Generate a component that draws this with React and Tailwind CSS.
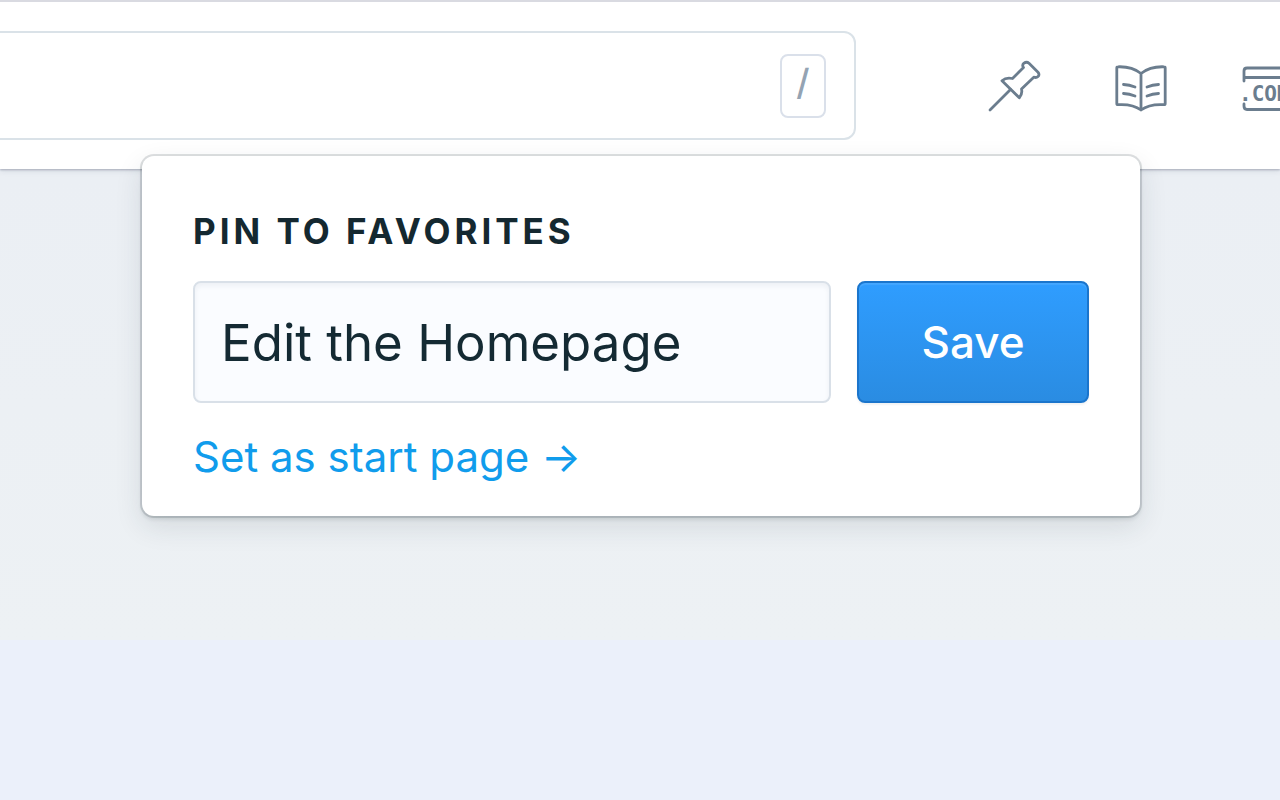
function PinIcon() {
    return (
        <svg viewBox="0 0 52 52" className="size-[52px] shrink-0 overflow-visible" fill="none" stroke="currentColor" strokeWidth="2.8" strokeLinecap="round" strokeLinejoin="round" aria-hidden="true">
            <path d="M2 48 22.500 27.500" />
            <path d="M14 18.800C17 16 20.500 15.500 24.500 16.500L35.500 5.500C34.300 4 34.500 2.300 36 1.200C37.500 .1 39.500 0 41 1.300L50 10.300C51.300 11.700 51.300 13.300 50 14.500C48.800 15.700 47.300 15.700 45.800 15.200L33.500 27C34.200 30 33.800 33 31.300 35.800Z" />
        </svg>
    )
}

function BookIcon() {
    return (
        <svg viewBox="0 0 52 52" className="size-[52px] shrink-0" fill="none" stroke="currentColor" strokeWidth="2.8" strokeLinecap="round" strokeLinejoin="round" aria-hidden="true">
            <path d="M26 11.500C19 6 11 4.500 3 4.800Q1.800 4.800 1.800 6V41.500Q1.800 42.700 3 42.700C11 42.200 20 43.500 26 48C32 43.500 41 42.200 49 42.700Q50.200 42.700 50.200 41.500V6Q50.200 4.800 49 4.800C41 4.500 33 6 26 11.500ZM26 11.500V48" />
            <path d="M8.500 22.500C12.500 22.600 16.500 23.500 20 25M8.500 31.500C12.500 31.600 16.500 32.500 20 34M43.500 22.500C39.500 22.600 35.500 23.500 32 25M43.500 31.500C39.500 31.600 35.500 32.500 32 34" />
        </svg>
    )
}

function DomainIcon() {
    return (
        <svg viewBox="0 0 52 52" className="size-[52px] shrink-0 overflow-visible" fill="none" stroke="currentColor" strokeWidth="2.8" strokeLinecap="round" strokeLinejoin="round" aria-hidden="true">
            <path d="M2 19V9Q2 6 5 6H47Q50 6 50 9V19M2 15.500H50M2 42V44Q2 47.500 5 47.500H47Q50 47.500 50 44V42" />
            <text x="-3" y="39" fill="currentColor" stroke="none" className="font-['DejaVu_Sans_Mono',monospace] text-[21px] font-bold">.COM</text>
        </svg>
    )
}

const tools = [
    { label: 'Pin', Icon: PinIcon },
    { label: 'Docs', Icon: BookIcon },
    { label: 'Domains', Icon: DomainIcon },
]

function PinPopover() {
    return (
        <form
            onSubmit={(e) => e.preventDefault()}
            className="absolute top-[156px] right-[140px] left-[142px] rounded-xl bg-white px-[51px] pt-[55px] pb-[35px] shadow-[0_0_0_2px_rgba(30,40,50,0.14),0_3px_4px_rgba(30,50,60,0.14),0_10px_28px_rgba(30,50,60,0.12)]"
        >
            <label htmlFor="pin-name" className="block text-[35px] leading-10 font-bold tracking-[4px] text-[#142830]">PIN TO FAVORITES</label>
            <div className="mt-[30px] flex gap-[26px]">
                <input
                    id="pin-name"
                    defaultValue="Edit the Homepage"
                    className="h-[122px] min-w-0 flex-1 rounded-lg border-2 border-[#d9e0e8] bg-[#fafcff] px-[26px] text-[51px] text-[#142a33] shadow-[inset_0_3px_5px_rgba(40,50,90,0.06)] outline-none"
                />
                <button type="submit" className="h-[122px] w-[232px] rounded-lg border-2 border-[#1b75cc] bg-linear-to-b from-[#2f9dff] to-[#2a8ce2] text-[44px] font-medium text-white shadow-[inset_0_2px_1px_rgba(255,255,255,0.1),0_2px_2px_rgba(30,50,60,0.06)]">Save</button>
            </div>
            <a href="#start" className="mt-[30px] block w-fit text-[42px] leading-12 text-[#109cec]">Set as start page →</a>
        </form>
    )
}

export default function App() {
    return (
        <div className="relative min-h-screen overflow-hidden bg-[#ebf0fa] font-[Inter,sans-serif]">
            <header className="relative flex h-[169px] border-t-2 border-[#d9dae1] bg-white pt-[29px] shadow-[0_1px_2px_rgba(40,45,80,0.3),0_2px_6px_rgba(40,45,80,0.1)]">
                <label className="-ml-4 flex h-[109px] flex-1 items-center rounded-xl border-2 border-[#dae2e8] pr-7">
                    <input type="search" aria-label="Search" className="h-full min-w-0 flex-1 px-12 text-[42px] outline-none" />
                    <kbd className="flex h-16 w-[46px] items-center justify-center rounded-lg border-2 border-[#dae0ea] pb-2 font-[Inter,sans-serif] text-[36px] leading-none font-medium text-[#94a3b3]">/</kbd>
                </label>
                <nav className="ml-[132px] flex h-[109px] w-[292px] shrink-0 items-center gap-[75px] overflow-hidden pt-1 text-[#6b7d8e]">
                    {tools.map(({ label, Icon }) => (
                        <button key={label} type="button" aria-label={label} className="shrink-0"><Icon /></button>
                    ))}
                </nav>
            </header>
            <main className="h-[471px] bg-linear-to-b from-[#ebeff4] to-[#edf1f4]" />
            <PinPopover />
        </div>
    )
}
